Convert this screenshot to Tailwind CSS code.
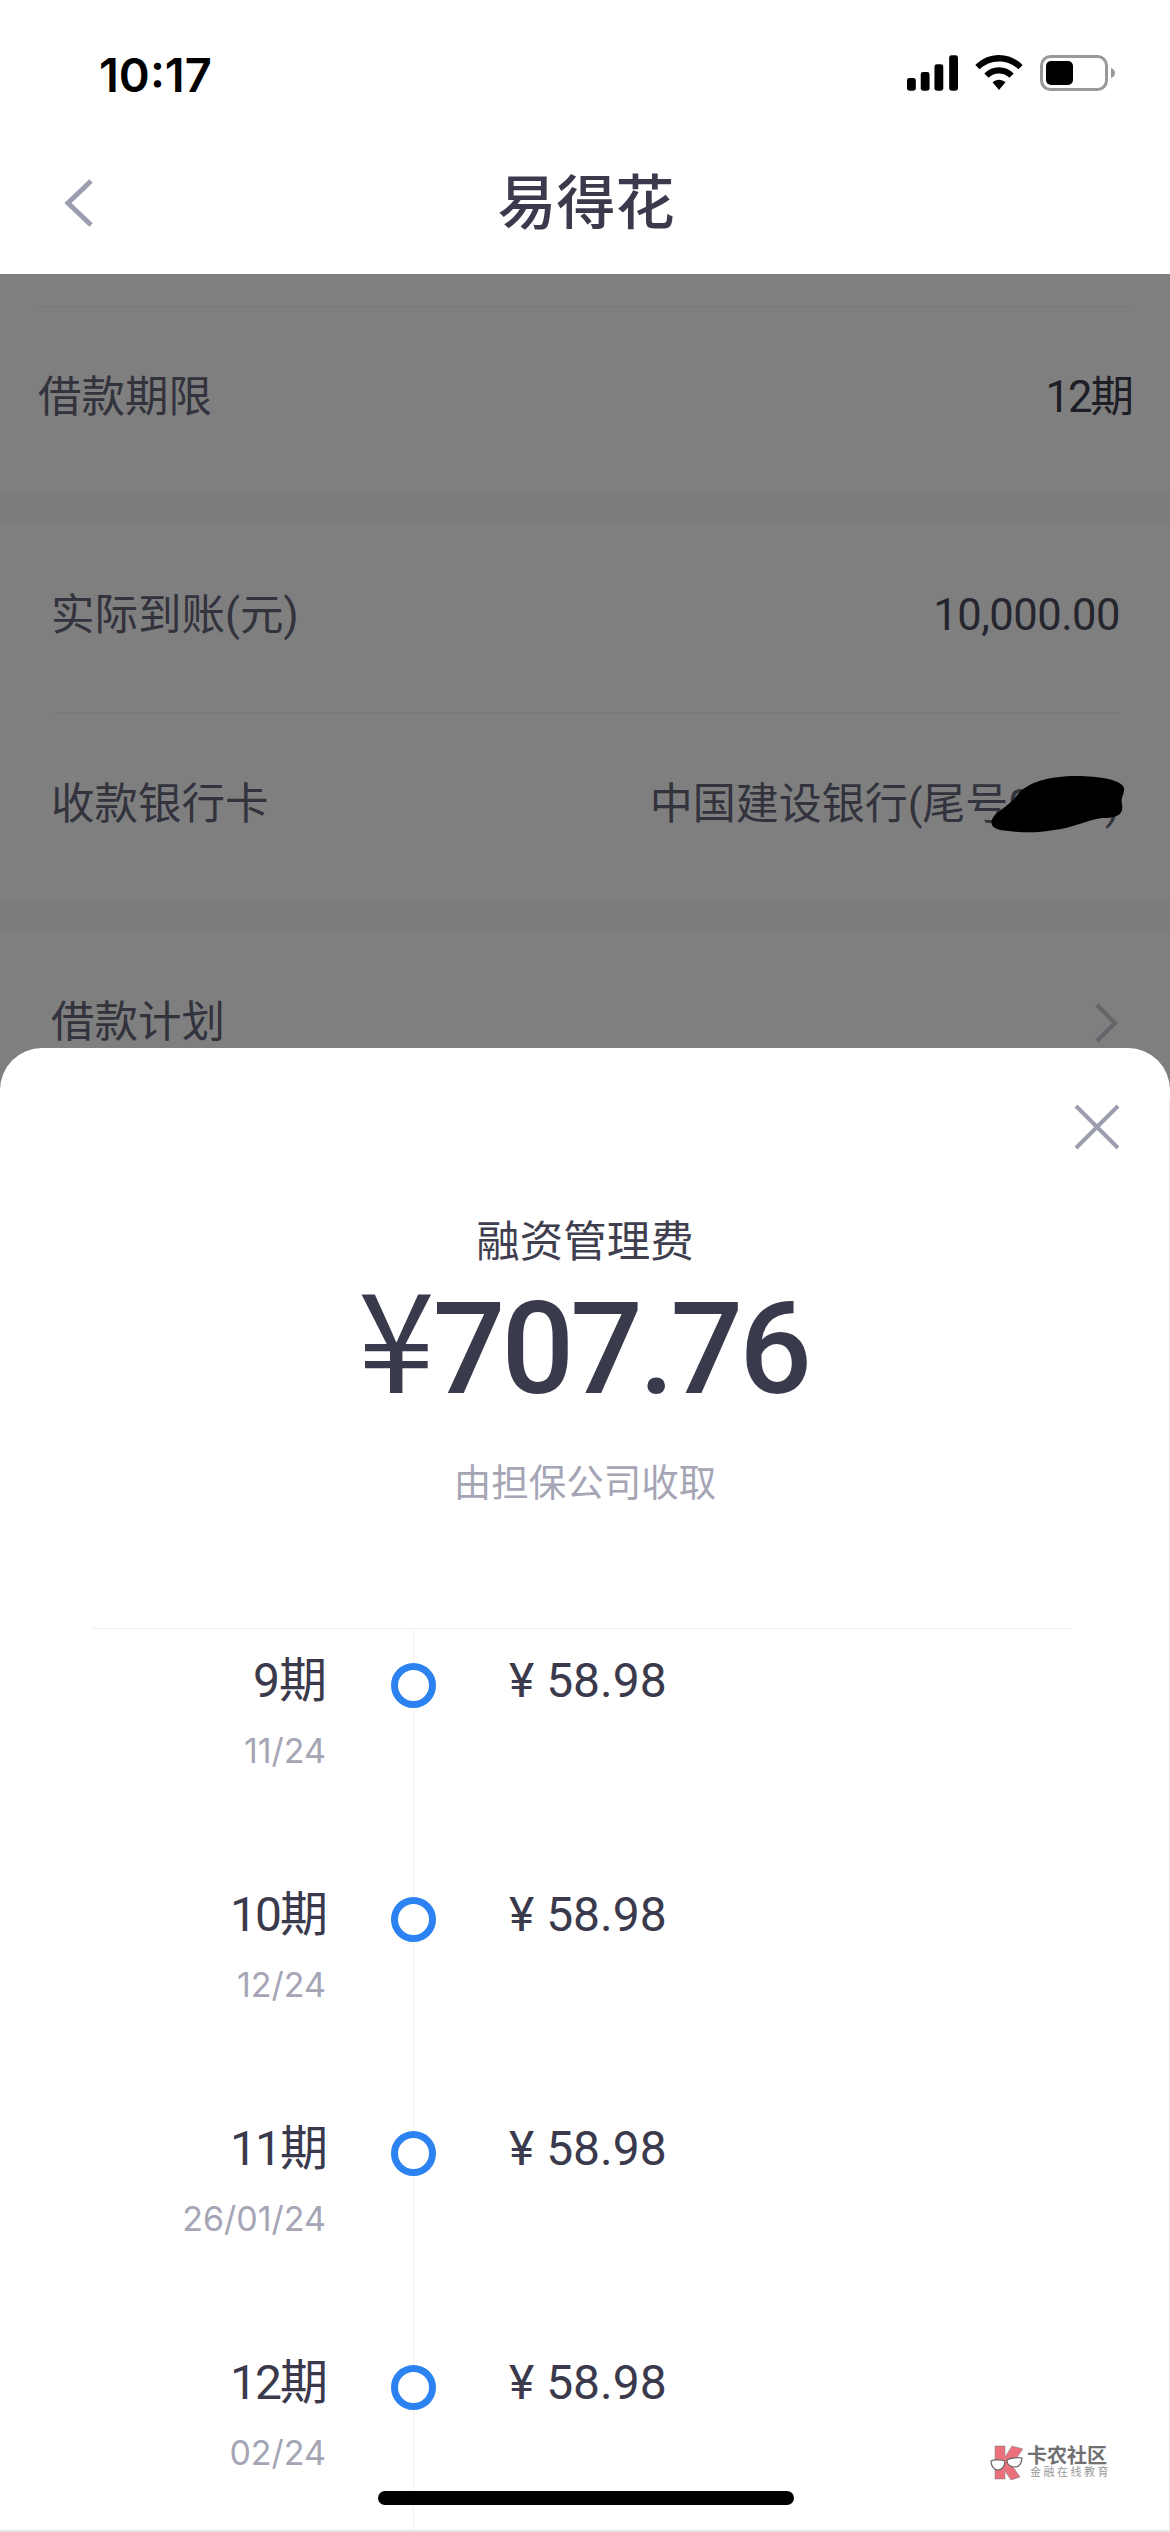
<!DOCTYPE html>
<html lang="zh">
<head>
<meta charset="utf-8">
<script src="https://cdn.jsdelivr.net/npm/@tailwindcss/browser@4"></script>
</head>
<body class="bg-white">
<div class="relative w-[1170px] h-[2532px] overflow-hidden bg-white font-['Roboto','Noto_Sans_CJK_SC',sans-serif] text-[#3a3a4c]">
  <!-- status bar -->
  <div class="h-[145px] pt-[48px] pl-[99px] pr-[55px] flex justify-between items-start">
    <span class="font-['Inter',sans-serif] text-[47px] leading-[54px] font-semibold text-black">10:17</span>
    <div class="flex items-start gap-[17px] pt-[7px]">
      <svg class="w-[51px] h-[36px]" viewBox="0 0 52 36"><rect x="0" y="23" width="9" height="13" rx="2.5" fill="#000"/><rect x="14" y="17" width="9" height="19" rx="2.5" fill="#000"/><rect x="28" y="9" width="9" height="27" rx="2.5" fill="#000"/><rect x="43" y="0" width="9" height="36" rx="2.5" fill="#000"/></svg>
      <svg class="w-[48px] h-[36px]" viewBox="0 0 50 38"><path d="M25 0C15.500 0 7 3.800 0 10.500L4.500 15C10 9.800 17 6.800 25 6.800S40 9.800 45.500 15L50 10.500C43 3.800 34.500 0 25 0Z" fill="#000"/><path d="M25 13C19 13 13.800 15.300 9.500 19.500L14 24C17 21.200 20.800 19.600 25 19.600S33 21.200 36 24L40.500 19.500C36.200 15.300 31 13 25 13Z" fill="#000"/><path d="M25 26C22.400 26 20.200 27 18.200 28.800L25 37L31.800 28.800C29.800 27 27.600 26 25 26Z" fill="#000"/></svg>
      <svg class="w-[75px] h-[36px]" viewBox="0 0 75 36"><rect x="1.500" y="1.500" width="65" height="33" rx="9" fill="none" stroke="#999" stroke-width="3"/><rect x="6" y="6" width="27" height="24" rx="5" fill="#000"/><path d="M71 13C74 14 75 16 75 18S74 22 71 23Z" fill="#999"/></svg>
    </div>
  </div>
  <!-- nav -->
  <header class="relative h-[129px] flex items-center justify-center">
    <svg class="absolute left-[62px] top-[33px] w-[34px] h-[50px]" viewBox="0 0 34 50"><path d="M29 3L6 25L29 47" fill="none" stroke="#9d9db0" stroke-width="5"/></svg>
    <h1 class="text-[59px] leading-[70px] font-medium text-[#3a3a4c] -mt-[11px] ml-[2px]">易得花</h1>
  </header>
  <!-- page under the scrim -->
  <main class="relative text-[43.500px] text-[#66667a]">
    <section class="pt-[32px] px-[38px]">
      <div class="border-t border-[#f2f2f2] h-[187px] flex items-center justify-between pb-[4px]">
        <span>借款期限</span><span class="text-[#3c3c4c] tracking-[-2px]">12期</span>
      </div>
    </section>
    <div class="h-[31px] bg-[#f8f8fc]"></div>
    <section class="pl-[51px] pr-[50px]">
      <div class="h-[188px] flex items-center justify-between pb-[4px]">
        <span>实际到账(元)</span><span class="text-[#4a4a5c] tracking-[-0.500px]">10,000.00</span>
      </div>
      <div class="border-t border-[#f2f2f2] h-[188px] flex items-center justify-between pb-[4px]">
        <span>收款银行卡</span><span class="text-[43px]">中国建设银行(尾号0000)</span>
      </div>
    </section>
    <div class="h-[30px] bg-[#f8f8fc]"></div>
    <section class="px-[51px]">
      <div class="h-[182px] flex items-center justify-between pt-[3px]">
        <span>借款计划</span>
        <svg class="w-[26px] h-[40px]" viewBox="0 0 26 40"><path d="M4 2L22 20L4 38" fill="none" stroke="#c8c8d6" stroke-width="4"/></svg>
      </div>
    </section>
  </main>
  <!-- scrim -->
  <div class="absolute inset-x-0 top-[274px] bottom-0 bg-black/50"></div>
  <!-- redaction scribble -->
  <svg class="absolute left-[990px] top-[774px] w-[136px] h-[60px]" viewBox="0 0 136 60"><path d="M2 46C4 38 18 34 28 20C38 8 60 2 86 2C110 2 132 6 134 14C135 20 130 24 132 30C134 40 128 44 112 44C96 46 84 54 64 56C44 60 24 58 10 56C4 54 0 52 2 46Z" fill="#000"/></svg>
  <!-- bottom sheet -->
  <section class="absolute inset-x-0 top-[1048px] bottom-0 bg-white rounded-t-[42px] flex flex-col items-center">
    <svg class="absolute left-[1073px] top-[55px] w-[48px] h-[48px]" viewBox="0 0 48 48"><path d="M3 3L45 45M45 3L3 45" fill="none" stroke="#9d9db0" stroke-width="4"/></svg>
    <p class="mt-[167px] text-[43.500px] leading-[56px] text-[#3f3f50]">融资管理费</p>
    <p class="-mt-[13px] mr-[4px] text-[128px] leading-[150px] font-medium text-[#393a4c] tracking-[-4px]"><span class="font-['Noto_Sans_CJK_SC',sans-serif] font-normal text-[138px] tracking-[-2px]">¥</span>707.76</p>
    <p class="mt-[34px] text-[37.500px] leading-[50px] text-[#a5a5b5]">由担保公司收取</p>
    <div class="relative mt-[120px] ml-[-4px] w-[982px] flex-1 border-t border-[#f0f0f2]">
      <div class="absolute left-[321px] top-0 bottom-0 border-l border-[#f2f2f5]"></div>
      <ol class="relative">
        <li class="h-[234px] flex items-start">
          <div class="w-[234px] text-right"><p class="text-[48px] leading-[64px] text-[#3a3a4c] mt-[20px] tracking-[-1px]">9期</p><p class="font-['Inter',sans-serif] text-[34px] leading-[44px] text-[#a5a5b5] mt-[16px]">11/24</p></div>
          <span class="ml-[65px] mt-[34px] size-[45px] rounded-full border-[7px] border-[#2b82f0] bg-white"></span>
          <p class="ml-[73px] mt-[20px] text-[48px] leading-[64px] text-[#3a3a4c]">¥ 58.98</p>
        </li>
        <li class="h-[234px] flex items-start">
          <div class="w-[234px] text-right"><p class="text-[48px] leading-[64px] text-[#3a3a4c] mt-[20px] tracking-[-2px]">10期</p><p class="font-['Inter',sans-serif] text-[34px] leading-[44px] text-[#a5a5b5] mt-[16px]">12/24</p></div>
          <span class="ml-[65px] mt-[34px] size-[45px] rounded-full border-[7px] border-[#2b82f0] bg-white"></span>
          <p class="ml-[73px] mt-[20px] text-[48px] leading-[64px] text-[#3a3a4c]">¥ 58.98</p>
        </li>
        <li class="h-[234px] flex items-start">
          <div class="w-[234px] text-right"><p class="text-[48px] leading-[64px] text-[#3a3a4c] mt-[20px] tracking-[-2px]">11期</p><p class="font-['Inter',sans-serif] text-[34px] leading-[44px] text-[#a5a5b5] mt-[16px]">26/01/24</p></div>
          <span class="ml-[65px] mt-[34px] size-[45px] rounded-full border-[7px] border-[#2b82f0] bg-white"></span>
          <p class="ml-[73px] mt-[20px] text-[48px] leading-[64px] text-[#3a3a4c]">¥ 58.98</p>
        </li>
        <li class="h-[234px] flex items-start">
          <div class="w-[234px] text-right"><p class="text-[48px] leading-[64px] text-[#3a3a4c] mt-[20px] tracking-[-2px]">12期</p><p class="font-['Inter',sans-serif] text-[34px] leading-[44px] text-[#a5a5b5] mt-[16px]">02/24</p></div>
          <span class="ml-[65px] mt-[34px] size-[45px] rounded-full border-[7px] border-[#2b82f0] bg-white"></span>
          <p class="ml-[73px] mt-[20px] text-[48px] leading-[64px] text-[#3a3a4c]">¥ 58.98</p>
        </li>
      </ol>
    </div>
  </section>
  <!-- watermark -->
  <div class="absolute left-[990px] top-[2445px] flex items-center gap-[4px]">
    <svg class="w-[33px] h-[35px]" viewBox="0 0 33 35"><path d="M5 1H15V12L22 1L33 4L25 15L21 19L30 32L21 35L15 26V34H5Z" fill="#ec6f7c" stroke="#8a8a8a" stroke-width="0.600"/><path d="M1 16C4 14 12 15 15 16C15 21 12 25 8 25C4 25 1 21 1 16Z" fill="#fff" stroke="#666" stroke-width="1.200"/><path d="M17 15C21 13 28 12 32 13C32 18 29 22 25 22C20 22 17 19 17 15Z" fill="#fff" stroke="#666" stroke-width="1.200"/></svg>
    <div class="flex flex-col items-start">
      <span class="text-[20px] leading-[20px] font-bold text-[#707070]">卡农社区</span>
      <span class="text-[11px] leading-[14px] tracking-[2.500px] text-[#999] pl-[3px]">金融在线教育</span>
    </div>
  </div>
  <!-- home indicator -->
  <div class="absolute left-[378px] bottom-[27px] w-[416px] h-[14px] rounded-full bg-black"></div>
  <!-- screenshot edge -->
  <div class="absolute inset-x-0 bottom-0 h-[2px] bg-[#e4e4e4]"></div>
  <div class="absolute right-0 top-[1100px] bottom-0 w-[1px] bg-[#eeeeee]"></div>
</div>
</body>
</html>
